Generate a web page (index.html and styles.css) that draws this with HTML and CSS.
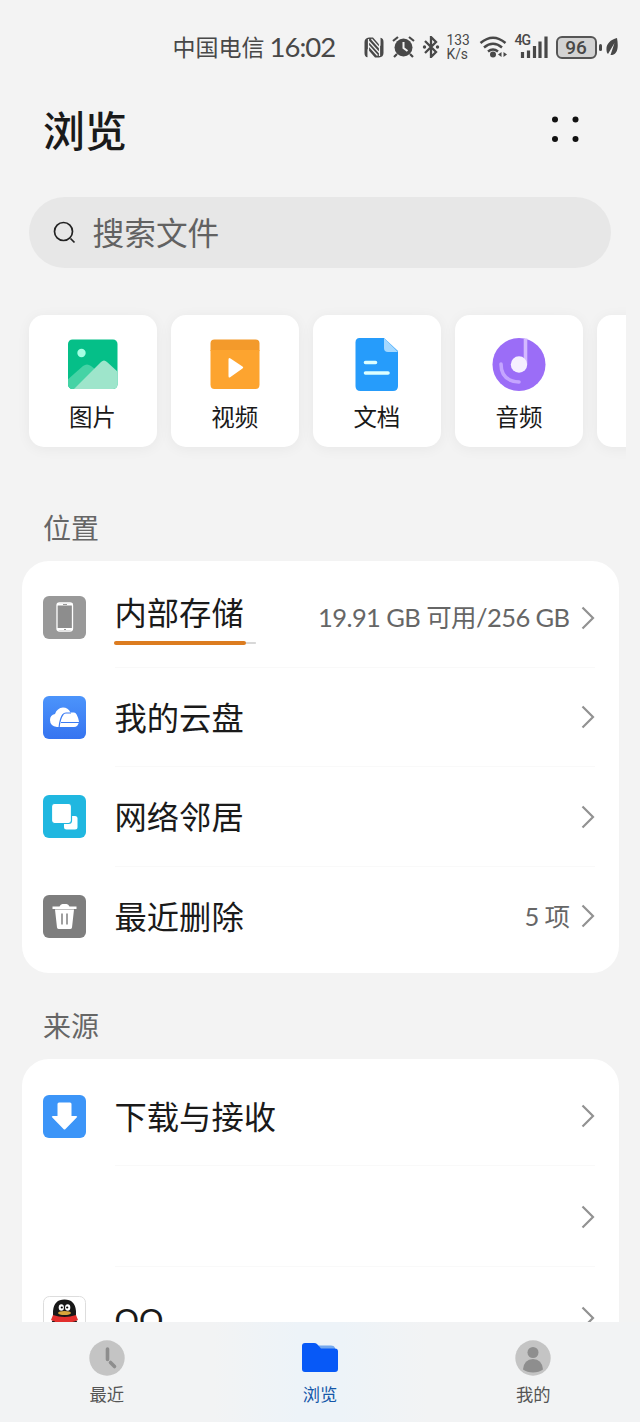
FILE: index.html
```html
<!DOCTYPE html>
<html lang="zh-CN">
<head>
<meta charset="utf-8">
<meta name="viewport" content="width=device-width, initial-scale=1">
<title>浏览</title>
<link rel="stylesheet" href="styles.css">
</head>
<body>
<svg class="defs" aria-hidden="true">
  <symbol id="chevron" viewBox="0 0 14 24"><path d="M1.500 1.500 12 12 1.500 22.500" fill="none" stroke="#929292" stroke-width="2.200"/></symbol>
</svg>
<div class="screen">
  <header class="status">
    <span class="carrier">中国电信</span>
    <span class="time">16:02</span>
    <svg class="nfc" width="20" height="21" viewBox="0 0 20 21"><path d="M5 .5h4L16.500 9V.7Q19.500 1 19.500 5v11q0 4-4.500 4.500h-4L3.500 12v8.300Q.5 20 .5 16V5Q.5 1 5 .5Z" fill="#484848"/><path d="M4.500 2v17M15.500 2v17M4.500 4l11 12M4.500 8.500l9 10M7.500 2l8 9" fill="none" stroke="#f3f3f3" stroke-width="1.200"/></svg>
    <svg class="alarm" width="23" height="22" viewBox="0 0 23 22"><circle cx="11.500" cy="11.500" r="9" fill="#484848"/><path d="M1 5 6 1M22 5 17 1M5 18l-3 3M18 18l3 3" stroke="#484848" stroke-width="2.200"/><path d="M11.500 6v6l4 3" fill="none" stroke="#f3f3f3" stroke-width="2"/></svg>
    <svg class="bluetooth" width="18" height="22" viewBox="0 0 18 22"><path d="m3 5 11 11-5 5V1l5 5L3 17" fill="none" stroke="#484848" stroke-width="2.300"/><circle cx="2.500" cy="11" r="1.700" fill="#484848"/><circle cx="15.500" cy="11" r="1.700" fill="#484848"/></svg>
    <span class="speed"><span>133</span><span>K/s</span></span>
    <svg class="wifi" width="28" height="22" viewBox="0 0 28 22"><path d="M1.500 7Q14-3.500 26.500 7M5 11.500q9-7.500 18 0M9 15.500q5-4 10 0" fill="none" stroke="#484848" stroke-width="2.500"/><circle cx="14" cy="18.500" r="3" fill="#484848"/><path d="m22.500 16-3.500 2.500 3.500 2.500zM24.500 16l3.500 2.500-3.500 2.500z" fill="#484848"/></svg>
    <span class="signal"><svg width="28" height="22" viewBox="0 0 28 22"><path d="M2.500 16v6M8.500 14.500V22M14.500 10v12M20 5.500V22M26 .5V22" stroke="#484848" stroke-width="3.200"/></svg><b>4G</b></span>
    <span class="battery">96</span>
    <span class="nub"></span>
    <svg class="leaf" width="12" height="18" viewBox="0 0 12 18"><path d="M11 0C4 2 0 6 .5 12c0 2 .7 3 1.500 4L8.500 5 4.500 17C11 17 13 11 11 0Z" fill="#484848"/></svg>
  </header>

  <div class="heading">
    <h1>浏览</h1>
    <svg width="28" height="28" viewBox="0 0 28 28" fill="#111"><circle cx="3" cy="4.500" r="3"/><circle cx="23.500" cy="4.500" r="3"/><circle cx="3" cy="24" r="3"/><circle cx="23.500" cy="24" r="3"/></svg>
  </div>

  <div class="search">
    <svg width="24" height="24" viewBox="0 0 24 24" fill="none" stroke="#222" stroke-width="1.700"><circle cx="10.500" cy="10.500" r="9"/><path d="m17.500 17.500 4 4"/></svg>
    <span>搜索文件</span>
  </div>

  <div class="categories">
    <div class="category">
      <svg width="54" height="54" viewBox="0 0 54 54"><defs><clipPath id="photo"><rect x="2" y="2.500" width="49.500" height="49.500" rx="4.500"/></clipPath></defs><g clip-path="url(#photo)"><path fill="#05bf88" d="M0 0h54v54H0z"/><path d="m1 43 16-14q4-3 8 0l9 7v18H1z" fill="#45d3a5"/><path d="m8 52 27-27q3-3 6 0l12 11v18H8z" fill="#9ee5cb"/></g><circle cx="15.500" cy="16" r="4.200" fill="#a5ffe3"/></svg>
      <span>图片</span>
    </div>
    <div class="category">
      <svg width="54" height="54" viewBox="0 0 54 54"><path d="M6.500 2.500h41q4 0 4 4V14h-49V6.500q0-4 4-4Z" fill="#f39a2b"/><path d="M2.500 13h49v34.500q0 4.500-4 4.500h-41q-4 0-4-4.500z" fill="#fda42f"/><path d="M20.500 22.500v16.500q0 2.500 2 1l12-8.500q1.500-1 0-2l-12-8q-2-1.500-2 1Z" fill="#fff"/></svg>
      <span>视频</span>
    </div>
    <div class="category">
      <svg width="54" height="54" viewBox="0 0 54 54"><path d="M9.500 1H34l14 13v35q0 5-5 5H10.500q-5 0-5-5V5.500Q5.500 1 9.500 1Z" fill="#269cfb"/><path d="M34 1v10q0 4 4 4h10z" fill="#a4d8ff"/><path d="M15.500 25.500h10M15.500 36H38" stroke="#dcffff" stroke-width="3.600" stroke-linecap="round"/></svg>
      <span>文档</span>
    </div>
    <div class="category">
      <svg width="54" height="54" viewBox="0 0 54 54"><circle cx="27" cy="27.500" r="26.500" fill="#9b6df7"/><path d="M9 27q0 17 18 18" fill="none" stroke="#c5a5ff" stroke-width="3.600" stroke-linecap="round"/><path d="M33.500 1.500V27" stroke="#d3b9ff" stroke-width="3.600"/><circle cx="27" cy="27.500" r="8.200" fill="#f5efff"/></svg>
      <span>音频</span>
    </div>
    <div class="category"></div>
  </div>

  <h2 class="label">位置</h2>
  <section class="panel">
    <div class="row">
      <svg class="icon" viewBox="0 0 43 43"><rect width="43" height="43" rx="6" fill="#999"/><rect x="14" y="7" width="15.500" height="28" rx="2.500" fill="#8d8d8d" stroke="#fff" stroke-width="1.300"/><path d="M14 8.500h15.500M14 33h15.500" stroke="#fff" stroke-width="2.200"/><path d="M20 8.500h4M21 33.500h2" stroke="#999"/></svg>
      <div class="body"><div class="storage"><span class="name">内部存储</span><div class="meter"><i></i></div></div><span class="detail">19.91 GB 可用/256 GB</span><svg class="arrow"><use href="#chevron"/></svg></div>
    </div>
    <div class="row">
      <svg class="icon" viewBox="0 0 43 43"><defs><linearGradient id="sky" x2="0" y2="1"><stop stop-color="#4c94fb"/><stop offset="1" stop-color="#3674f0"/></linearGradient></defs><rect width="43" height="43" rx="6" fill="url(#sky)"/><path d="M14 31q-7-1-7-7 0-5 5-6 2-6 8-6.500 5 0 7.500 5H31q3 0 5 9-1 5.500-5 5.500z" fill="#fff"/><path d="M16 32q1-10 4-13.500 1-1.500 3-1.500h5M18 26.500h18" fill="none" stroke="#3c7cf3" stroke-width="1.200"/></svg>
      <div class="body"><span class="name">我的云盘</span><svg class="arrow"><use href="#chevron"/></svg></div>
    </div>
    <div class="row">
      <svg class="icon" viewBox="0 0 43 43"><rect width="43" height="43" rx="6" fill="#20b7e0"/><rect x="21" y="21" width="13.500" height="13.500" rx="2.500" fill="#fff"/><rect x="8.500" y="8.500" width="20" height="20" rx="3" fill="#fff" stroke="#20b7e0" stroke-width="1.200"/></svg>
      <div class="body"><span class="name">网络邻居</span><svg class="arrow"><use href="#chevron"/></svg></div>
    </div>
    <div class="row">
      <svg class="icon" viewBox="0 0 43 43"><rect width="43" height="43" rx="6" fill="#7e7e7e"/><path d="M9.500 11.500h7q1-2.500 3-2.500h4q2 0 3 2.500h7V14h-24zM12 14.500h19l-2 18q-.3 1.500-2 1.500H16q-1.700 0-2-1.500z" fill="#fff"/><path d="M19 18.500v11M24 18.500v11" stroke="#777" stroke-width="1.400"/></svg>
      <div class="body"><span class="name">最近删除</span><span class="detail">5 项</span><svg class="arrow"><use href="#chevron"/></svg></div>
    </div>
  </section>

  <h2 class="label">来源</h2>
  <section class="panel sources">
    <div class="row">
      <svg class="icon" viewBox="0 0 43 43"><rect width="43" height="43" rx="6" fill="#3c95f8"/><path d="M14.500 9q0-1.500 1.500-1.500h11q1.500 0 1.500 1.500v12h4.500q2 0 .7 1.500L22.500 34q-1 1-2 0L9.300 22.500Q8 21 10 21h4.500z" fill="#fff"/></svg>
      <div class="body"><span class="name">下载与接收</span><svg class="arrow"><use href="#chevron"/></svg></div>
    </div>
    <div class="row">
      <span class="icon"></span>
      <div class="body"><span class="name"></span><svg class="arrow"><use href="#chevron"/></svg></div>
    </div>
    <div class="row">
      <svg class="icon" viewBox="0 0 43 43"><rect x=".5" y=".5" width="42" height="42" rx="6" fill="#fff" stroke="#ddd"/><path d="M8 32q-2-2 2-8V15Q11 3.500 21.500 3.500T33 15v9q4 6 2 8l-2 6H11z" fill="#181818"/><ellipse cx="18.300" cy="11.500" rx="2.600" ry="3.300" fill="#fff"/><ellipse cx="24.700" cy="11.500" rx="2.600" ry="3.300" fill="#fff"/><circle cx="18.800" cy="11.500" r="1.100"/><circle cx="24.200" cy="11.500" r="1.100"/><ellipse cx="21.500" cy="17" rx="6.500" ry="2" fill="#d9a63a"/><path d="M10 19q11.500 4 23 0l2 5q-13.500 6-27 0z" fill="#e22e2c"/><path d="M12 23h6v6h-6z" fill="#e22e2c"/></svg>
      <div class="body"><span class="name latin">QQ</span><svg class="arrow"><use href="#chevron"/></svg></div>
    </div>
  </section>

  <nav class="tabs">
    <div class="tab">
      <svg width="38" height="38" viewBox="0 0 38 38"><circle cx="19" cy="19" r="17.700" fill="#c4c4c4"/><path d="M19.500 10v10.500M22.500 23.500l4 4" stroke="#8d8d8d" stroke-width="3.600" stroke-linecap="round"/></svg>
      <span>最近</span>
    </div>
    <div class="tab active">
      <svg width="38" height="38" viewBox="0 0 38 38"><path d="M15 6.500h15q3 0 4 2v4H18z" fill="#73a7ee"/><path d="M4 4h9q2 0 3 1l4 4.500h14q3 0 3 3V30q0 3-3 3H4q-3 0-3-3V7q0-3 3-3Z" fill="#0759f7"/></svg>
      <span>浏览</span>
    </div>
    <div class="tab">
      <svg width="38" height="38" viewBox="0 0 38 38"><circle cx="19" cy="19" r="17.700" fill="#c4c4c4"/><circle cx="19" cy="13.500" r="5.500" fill="#8e8e8e"/><path d="M9 30.500q1-10.500 10-10.500t10 10.500q-4 3-10 3t-10-3Z" fill="#8e8e8e"/></svg>
      <span>我的</span>
    </div>
  </nav>
</div>
</body>
</html>
```
FILE: styles.css
```css
* { box-sizing: border-box; }
body { margin: 0; background: #f3f3f3; color: #1a1a1a; font-family: "Noto Sans CJK SC", sans-serif; }
h1, h2 { margin: 0; }
svg { display: block; flex: none; }
.defs { width: 0; height: 0; position: absolute; }
.screen { width: 640px; height: 1422px; display: flex; flex-direction: column; overflow: hidden; }

.status { height: 94px; flex: none; display: flex; align-items: center; padding-left: 172.500px; color: #484848; white-space: nowrap; }
.carrier { width: 97px; margin-top: -2px; font-size: 23px; line-height: 30px; }
.time { width: 94px; font-family: Lato, sans-serif; font-size: 27.500px; line-height: 30px; letter-spacing: -1px; }
.alarm { margin-left: 8px; }
.bluetooth { margin-left: 7px; }
.speed { width: 24px; margin-left: 7px; display: flex; flex-direction: column; font: 13.800px/14px Roboto, sans-serif; }
.wifi { margin-left: 8px; }
.signal { width: 33px; margin-left: 8px; padding-left: 5px; position: relative; }
.signal b { position: absolute; left: 0; top: -3px; width: 16px; font: 500 14px/14px Roboto, sans-serif; letter-spacing: -1px; background: #f3f3f3; }
.battery { width: 41px; height: 23px; margin-left: 8px; border: 2px solid #555; border-radius: 6px; background: #d3d3d3; font: 500 19px/19px Roboto, sans-serif; text-align: center; }
.nub { width: 3px; height: 7px; margin-left: 2px; border-radius: 2px; background: #484848; }
.leaf { margin-left: 4px; }

.heading { height: 103px; flex: none; display: flex; justify-content: space-between; padding: 6px 60px 0 43px; }
.heading h1 { font-size: 42px; line-height: 58px; font-weight: 500; }
.heading svg { margin-top: 15px; }

.search { height: 71px; flex: none; margin: 0 29px; padding: 0 24px; display: flex; align-items: center; gap: 15.500px; border-radius: 36px; background: #e7e7e7; color: #626262; font-size: 31.700px; line-height: 44px; }
.search span { margin-top: -3px; }

.categories { height: 212px; flex: none; margin-right: 14px; padding: 47px 0 0 28.500px; display: flex; align-items: flex-start; gap: 14.200px; overflow: hidden; }
.category { width: 128px; height: 132px; flex: none; display: flex; flex-direction: column; align-items: center; padding-top: 22px; border-radius: 15px; background: #fff; box-shadow: 0 2px 14px rgba(0, 0, 0, 0.05); }
.category span { margin-top: 8px; font-size: 23.500px; line-height: 34px; }

.label { height: 81px; flex: none; padding: 27px 43px 0; font-size: 28px; line-height: 40px; font-weight: 400; color: #666; }
.panel { flex: none; margin: 0 21.500px; padding: 7px 0 7px 21px; border-radius: 27px; background: #fff; }
.panel + .label { height: 86px; padding-top: 32px; }
.row { height: 99.500px; display: flex; align-items: center; gap: 29px; }
.icon { width: 43px; height: 43px; flex: none; }
.body { height: 100%; flex: 1; display: flex; align-items: center; margin-right: 24px; border-bottom: 1px solid #f9f9f9; }
.row:last-child .body { border-bottom-color: transparent; }
.name { flex: 1; margin-top: -2px; font-size: 32.300px; line-height: 44px; }
.latin { margin-top: 4px; font-family: Lato, sans-serif; font-size: 30.500px; }
.detail { font-family: Lato, "Noto Sans CJK SC", sans-serif; font-size: 25.500px; line-height: 36px; letter-spacing: -0.580px; color: #666; }
.arrow { width: 14px; height: 24px; margin: 1px 0 0 11px; }
.storage { flex: 1; display: flex; flex-direction: column; padding-top: 1px; }
.storage .name { flex: none; }
.meter { width: 142px; height: 4px; margin: 8px 0 0 -1px; background: linear-gradient(#d8d8d8, #d8d8d8) center / 100% 2px no-repeat; border-radius: 2px; }
.meter i { display: block; width: 132px; height: 4px; border-radius: 2px; background: #dc7c20; }
.sources { height: 263px; padding-bottom: 0; border-radius: 27px 27px 0 0; overflow: hidden; }
.sources .row { height: 101px; }
.sources .row:first-child { height: 100px; }

.tabs { height: 100px; flex: none; display: grid; grid-template-columns: repeat(3, 1fr); background: #f2f3f4; }
.tab { display: flex; flex-direction: column; align-items: center; padding-top: 17px; font-size: 17.300px; line-height: 26px; color: #555; }
.tab span { margin-top: 4px; }
.active { background: linear-gradient(90deg, #f2f3f4, #edf3f8 40%, #edf3f8 60%, #f2f3f4); color: #1557a8; }
```
